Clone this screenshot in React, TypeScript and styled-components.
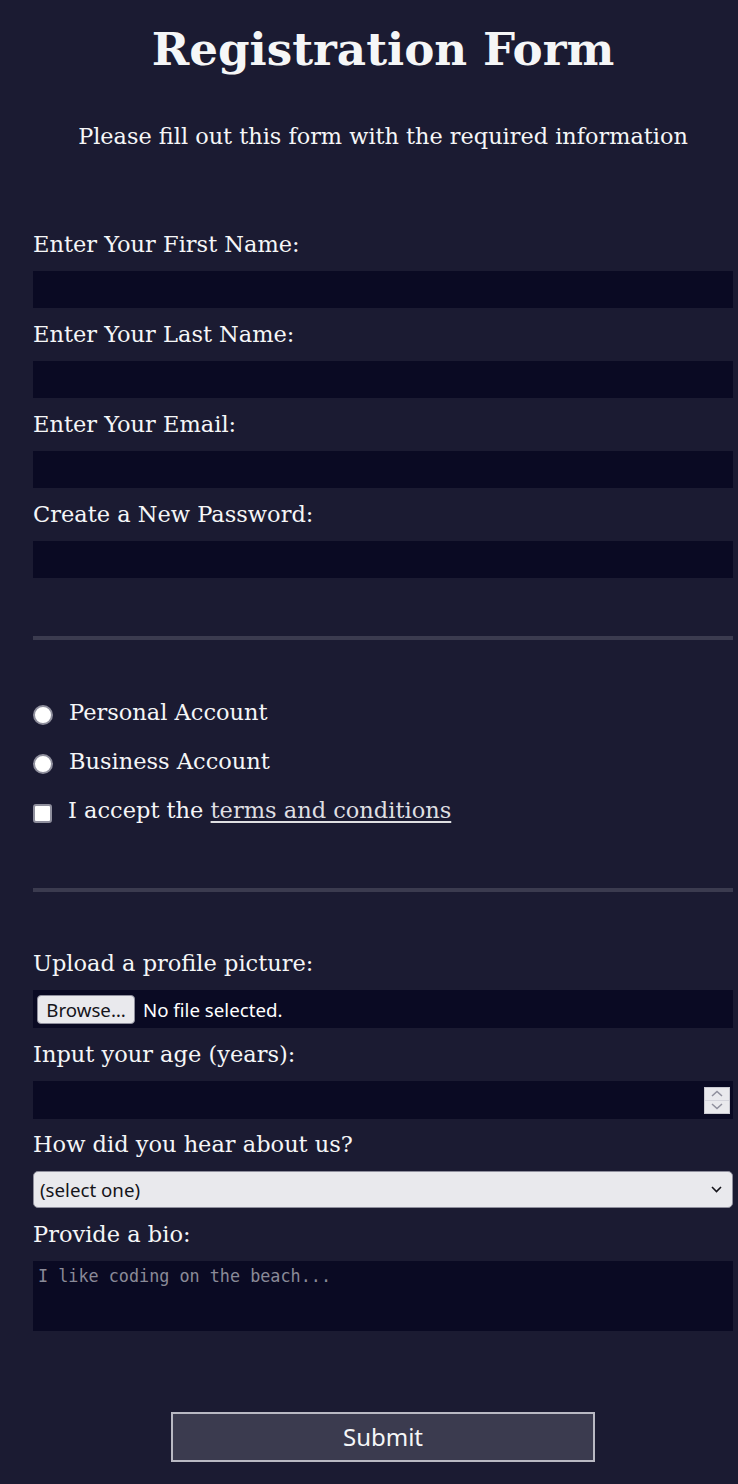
import React from "react";
import styled, { createGlobalStyle } from "styled-components";

const GlobalStyle = createGlobalStyle`
  html, body {
    margin: 0;
    padding: 0;
    background: #1b1b32;
  }
  body {
    color: #f5f6f7;
    font-family: "DejaVu Serif", serif;
    font-size: 22.5px;
  }
  * { box-sizing: border-box; }
`;

const Page = styled.main`
  width: 700px;
  margin-left: 33px;
  padding: 24px 0 22px;
`;

const Title = styled.h1`
  margin: 0;
  text-align: center;
  font-size: 45.2px;
  line-height: 52px;
  font-weight: 700;
`;

const Subtitle = styled.p`
  margin: 47px 0 0;
  text-align: center;
  font-size: 22.4px;
  line-height: 26px;
`;

const Form = styled.form`
  display: flex;
  flex-direction: column;
`;

const Section = styled.fieldset<{ $gap: number; $top: number; $bottom: number; $divider?: boolean }>`
  margin: 0;
  min-width: 0;
  padding: ${(p) => p.$top}px 0 ${(p) => p.$bottom}px;
  border: none;
  border-bottom: ${(p) => (p.$divider ? "4px solid #3b3b4f" : "none")};
  display: flex;
  flex-direction: column;
  gap: ${(p) => p.$gap}px;
`;

const Field = styled.label`
  display: flex;
  flex-direction: column;
  gap: 14px;
`;

const LabelText = styled.span`
  line-height: 26px;
`;

const TextInput = styled.input<{ $h?: number }>`
  width: 100%;
  height: ${(p) => p.$h ?? 37}px;
  margin: 0;
  padding: 0 4px;
  background: #0a0a23;
  border: 1px solid #0a0a23;
  color: #ffffff;
  font: 18.7px "Noto Sans", sans-serif;
  outline: none;
  appearance: textfield;
  -moz-appearance: textfield;
  &::-webkit-outer-spin-button,
  &::-webkit-inner-spin-button {
    -webkit-appearance: none;
    margin: 0;
  }
`;

const ChoiceRow = styled.label`
  display: flex;
  align-items: center;
  height: 38px;
  gap: 16px;
`;

const ChoiceText = styled.span`
  line-height: 26px;
  margin-bottom: 6px;
`;

const Radio = styled.input.attrs({ type: "radio" })`
  appearance: none;
  margin: 0;
  flex-shrink: 0;
  width: 20px;
  height: 20px;
  border-radius: 50%;
  background: #ffffff;
  border: 2px solid #8f8f9d;
`;

const Checkbox = styled.input.attrs({ type: "checkbox" })`
  appearance: none;
  margin: 0;
  flex-shrink: 0;
  width: 19px;
  height: 19px;
  border-radius: 3px;
  background: #ffffff;
  border: 2px solid #8f8f9d;
`;

const TermsLink = styled.a`
  color: #dfdfe2;
  text-decoration: underline;
  text-underline-offset: 3px;
`;

const HiddenFile = styled.input.attrs({ type: "file" })`
  display: none;
`;

const FileBox = styled.div`
  display: flex;
  align-items: center;
  gap: 8px;
  height: 38px;
  padding: 0 4px;
  background: #0a0a23;
  font: 18.7px "Noto Sans", sans-serif;
  color: #ffffff;
`;

const BrowseButton = styled.span`
  display: flex;
  align-items: center;
  justify-content: center;
  width: 98px;
  height: 29px;
  background: #e9e9ed;
  border: 1px solid #8f8f9d;
  border-radius: 4px;
  color: #15141a;
`;

const ControlWrap = styled.div`
  position: relative;
`;

const Spinner = styled.div`
  position: absolute;
  right: 3px;
  top: 6px;
  width: 26px;
  height: 27px;
  display: flex;
  flex-direction: column;
  background: #e9e9ed;
  border: 1px solid #c9c9d1;
`;

const SpinHalf = styled.div<{ $top?: boolean }>`
  flex: 1;
  display: flex;
  align-items: center;
  justify-content: center;
  border-bottom: ${(p) => (p.$top ? "1px solid #d4d4dc" : "none")};
`;

const Select = styled.select`
  width: 100%;
  height: 37px;
  margin: 0;
  padding: 0 30px 0 6px;
  appearance: none;
  background: #e9e9ed;
  border: 1px solid #8f8f9d;
  border-radius: 5px;
  color: #15141a;
  font: 18.7px "Noto Sans", sans-serif;
`;

const Chevron = styled.svg`
  position: absolute;
  right: 11px;
  top: 15px;
  pointer-events: none;
`;

const TextArea = styled.textarea`
  width: 100%;
  height: 70px;
  margin: 0;
  padding: 4px 4px;
  background: #0a0a23;
  border: 1px solid #0a0a23;
  color: #ffffff;
  font: 16.8px "DejaVu Sans Mono", monospace;
  resize: none;
  outline: none;
  &::placeholder {
    color: #8a8a98;
  }
`;

const SubmitButton = styled.input.attrs({ type: "submit" })`
  display: block;
  width: 424px;
  height: 50px;
  margin: 24px auto 0;
  background: #3b3b4f;
  border: 2px solid #b9b9c3;
  color: #f5f6f7;
  font: 24px "Noto Sans", sans-serif;
  cursor: pointer;
`;

const Caret = ({ up }: { up?: boolean }) => (
  <svg width="12" height="7" viewBox="0 0 12 7">
    <path
      d={up ? "M1 6 L6 1.5 L11 6" : "M1 1 L6 5.5 L11 1"}
      fill="none"
      stroke="#8f8f9d"
      strokeWidth="1.5"
    />
  </svg>
);

export default function App() {
  return (
    <>
      <GlobalStyle />
      <Page>
        <Title>Registration Form</Title>
        <Subtitle>Please fill out this form with the required information</Subtitle>
        <Form onSubmit={(e) => e.preventDefault()}>
          <Section $gap={13} $top={82} $bottom={58} $divider>
            <Field>
              <LabelText>Enter Your First Name:</LabelText>
              <TextInput type="text" name="first-name" />
            </Field>
            <Field>
              <LabelText>Enter Your Last Name:</LabelText>
              <TextInput type="text" name="last-name" />
            </Field>
            <Field>
              <LabelText>Enter Your Email:</LabelText>
              <TextInput type="email" name="email" />
            </Field>
            <Field>
              <LabelText>Create a New Password:</LabelText>
              <TextInput type="password" name="password" />
            </Field>
          </Section>

          <Section $gap={11} $top={56} $bottom={56} $divider>
            <ChoiceRow>
              <Radio name="account-type" />
              <ChoiceText>Personal Account</ChoiceText>
            </ChoiceRow>
            <ChoiceRow>
              <Radio name="account-type" />
              <ChoiceText>Business Account</ChoiceText>
            </ChoiceRow>
            <ChoiceRow>
              <Checkbox name="terms" />
              <ChoiceText>
                I accept the <TermsLink href="#">terms and conditions</TermsLink>
              </ChoiceText>
            </ChoiceRow>
          </Section>

          <Section $gap={12.6} $top={58} $bottom={57}>
            <Field>
              <LabelText>Upload a profile picture:</LabelText>
              <HiddenFile name="file" />
              <FileBox>
                <BrowseButton>Browse…</BrowseButton>
                <span>No file selected.</span>
              </FileBox>
            </Field>
            <Field>
              <LabelText>Input your age (years):</LabelText>
              <ControlWrap>
                <TextInput type="number" name="age" min={13} max={120} $h={38} />
                <Spinner>
                  <SpinHalf $top>
                    <Caret up />
                  </SpinHalf>
                  <SpinHalf>
                    <Caret />
                  </SpinHalf>
                </Spinner>
              </ControlWrap>
            </Field>
            <Field>
              <LabelText>How did you hear about us?</LabelText>
              <ControlWrap>
                <Select name="referrer" defaultValue="">
                  <option value="">(select one)</option>
                  <option value="1">freeCodeCamp News</option>
                  <option value="2">freeCodeCamp YouTube Channel</option>
                  <option value="3">freeCodeCamp Forum</option>
                  <option value="4">Other</option>
                </Select>
                <Chevron width="11" height="7" viewBox="0 0 11 7">
                  <path d="M1 1 L5.5 5.5 L10 1" fill="none" stroke="#15141a" strokeWidth="1.6" />
                </Chevron>
              </ControlWrap>
            </Field>
            <Field>
              <LabelText>Provide a bio:</LabelText>
              <TextArea name="bio" placeholder="I like coding on the beach..." />
            </Field>
          </Section>

          <SubmitButton value="Submit" />
        </Form>
      </Page>
    </>
  );
}
